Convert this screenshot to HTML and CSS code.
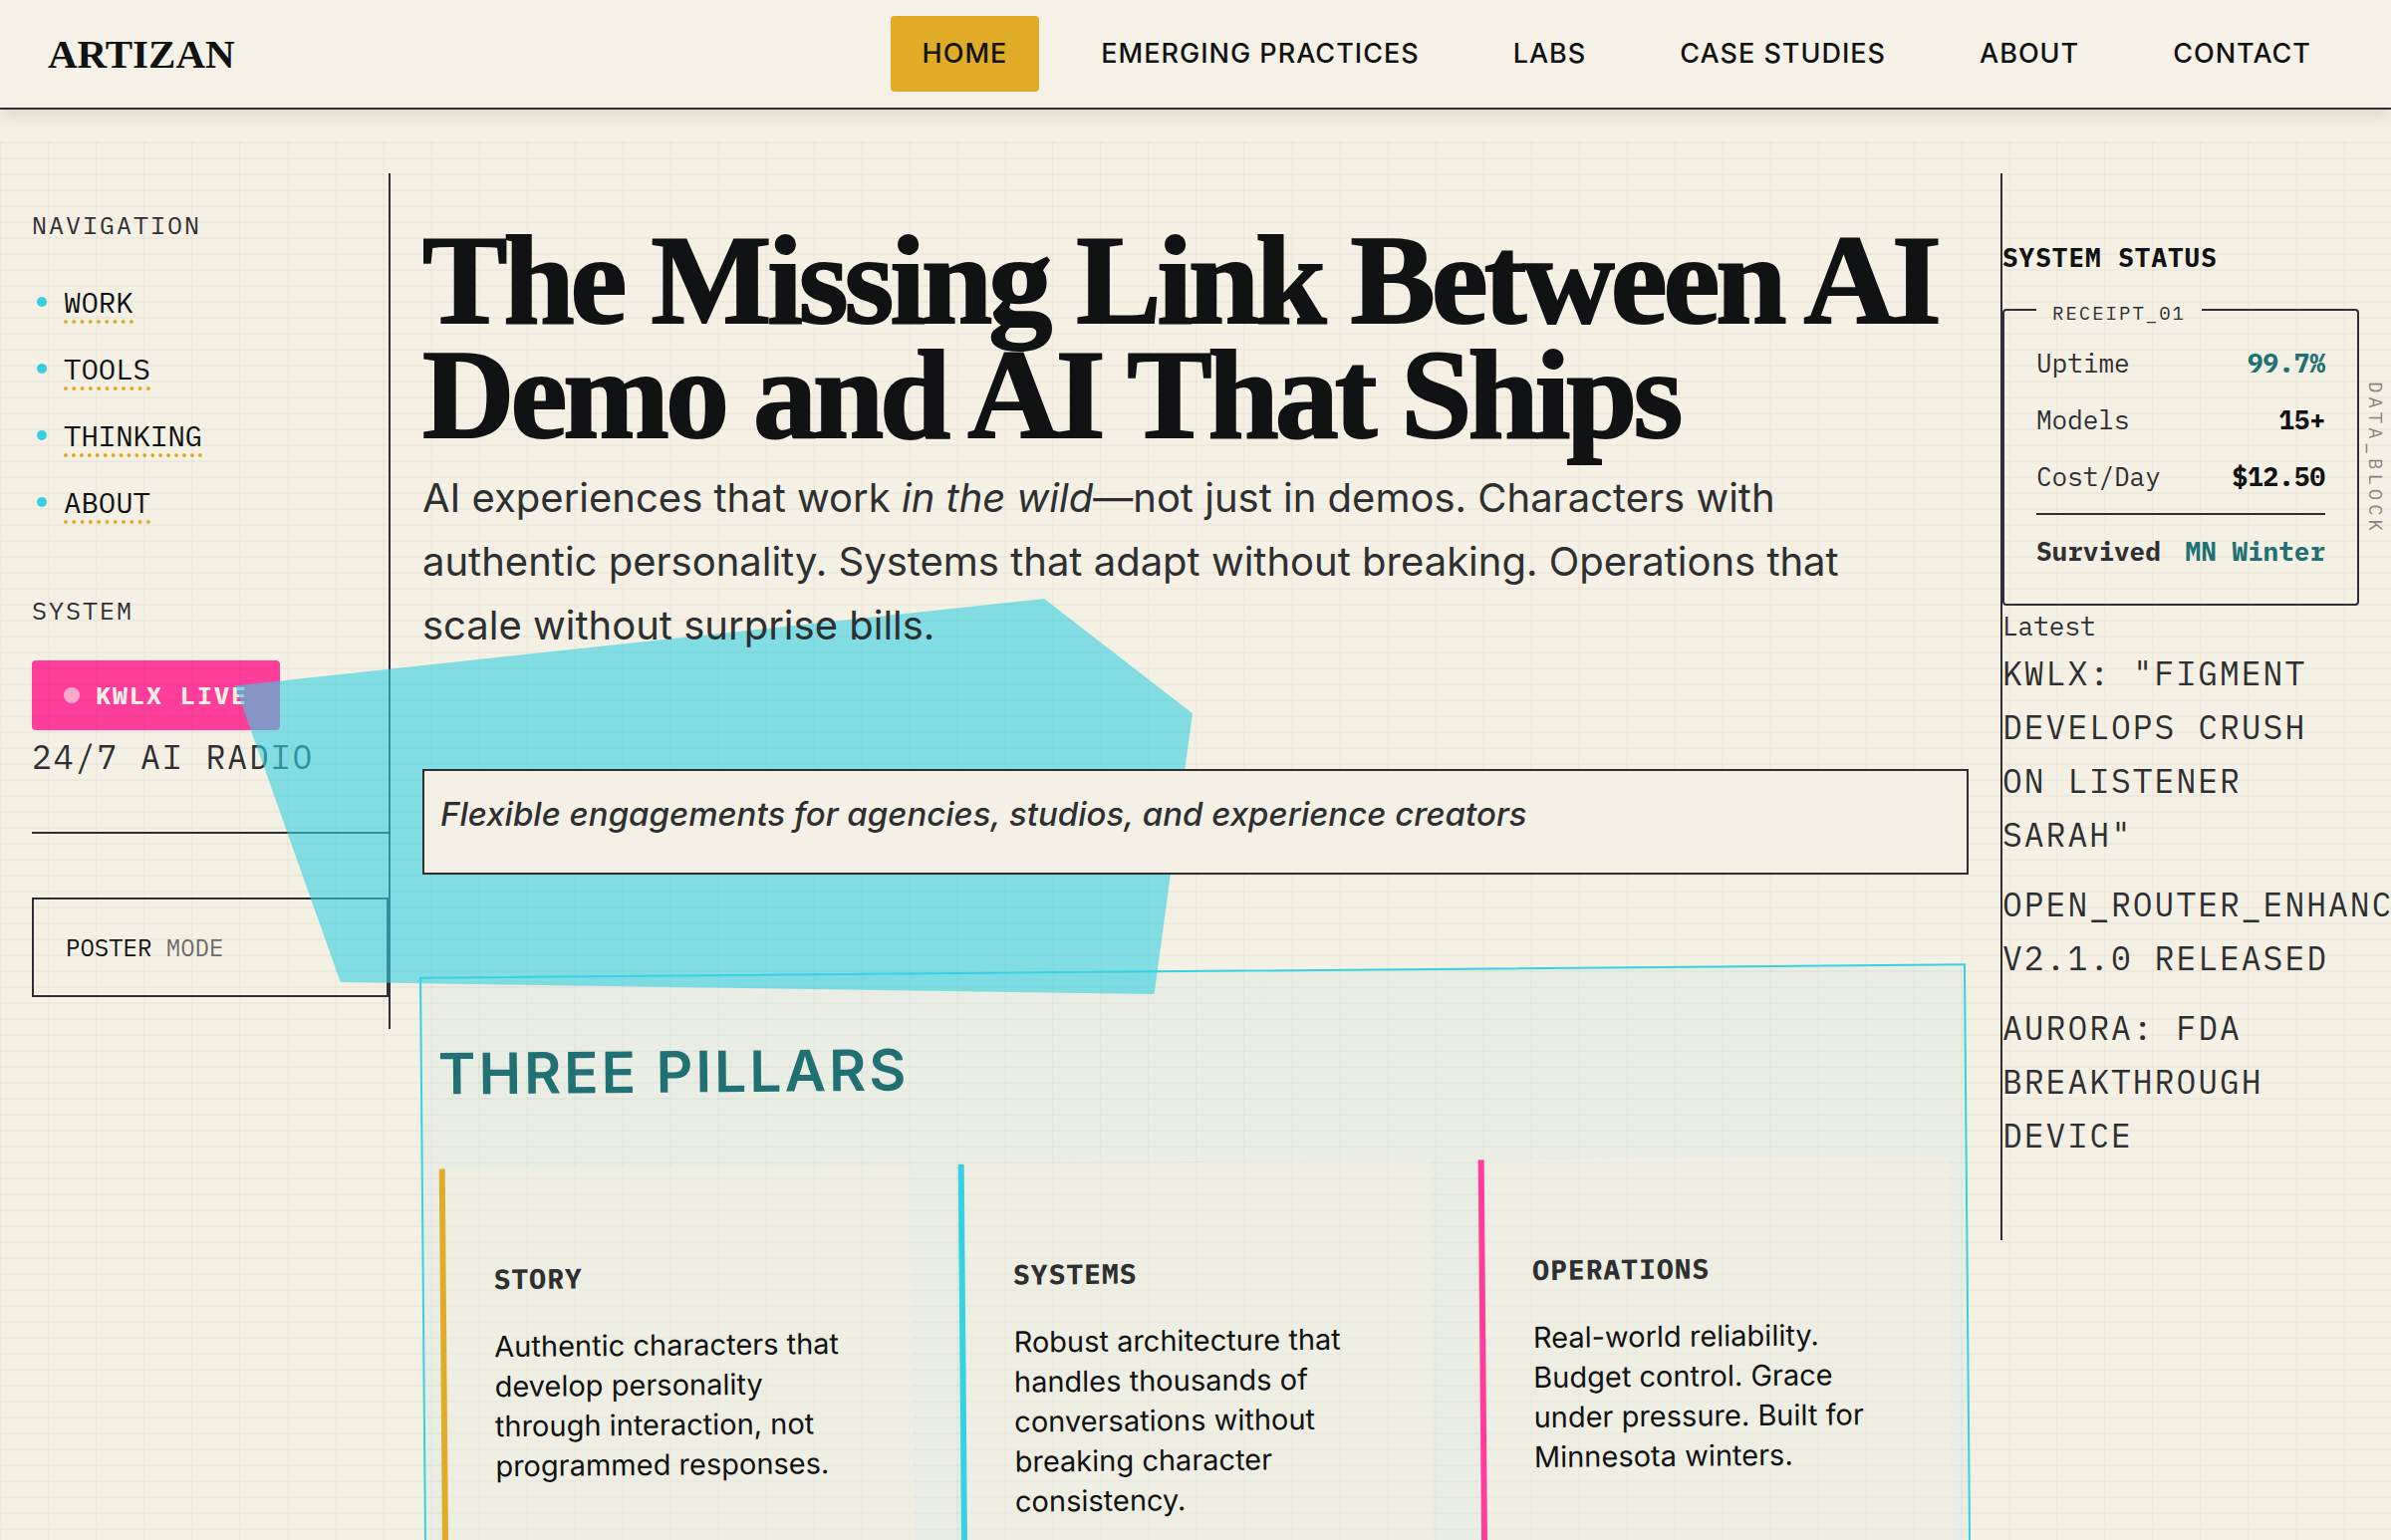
FILE: index.html
```html
<!DOCTYPE html>
<html lang="en">
<head>
<meta charset="utf-8">
<title>Artizan</title>
<meta name="viewport" content="width=device-width, initial-scale=1">
<link rel="stylesheet" href="styles.css">
</head>
<body>
<header class="site-header">
  <a class="logo" href="#">ARTIZAN</a>
  <nav class="site-nav" aria-label="Main">
    <a class="active" href="#">HOME</a>
    <a href="#">EMERGING PRACTICES</a>
    <a href="#">LABS</a>
    <a href="#">CASE STUDIES</a>
    <a href="#">ABOUT</a>
    <a href="#">CONTACT</a>
  </nav>
</header>
<div class="layout">
  <aside class="side side-left">
    <h2 class="side-title">NAVIGATION</h2>
    <ul class="side-links">
      <li><a href="#">WORK</a></li>
      <li><a href="#">TOOLS</a></li>
      <li><a href="#">THINKING</a></li>
      <li><a href="#">ABOUT</a></li>
    </ul>
    <h2 class="side-title">SYSTEM</h2>
    <button class="live" type="button"><span class="live-dot"></span>KWLX LIVE</button>
    <p class="mono-note">24/7 AI RADIO</p>
    <hr class="rule">
    <button class="poster" type="button">POSTER <span>MODE</span></button>
  </aside>
  <main class="content">
    <div class="blob" aria-hidden="true"></div>
    <h1>The Missing Link Between AI Demo and AI That Ships</h1>
    <p class="intro">AI experiences that work <em>in the wild</em>—not just in demos. Characters with authentic personality. Systems that adapt without breaking. Operations that scale without surprise bills.</p>
    <p class="tagline">Flexible engagements for agencies, studios, and experience creators</p>
    <section class="pillars">
      <h2>THREE PILLARS</h2>
      <div class="cards">
        <article class="card story">
          <h3>STORY</h3>
          <p>Authentic characters that develop personality through interaction, not programmed responses.</p>
        </article>
        <article class="card systems">
          <h3>SYSTEMS</h3>
          <p>Robust architecture that handles thousands of conversations without breaking character consistency.</p>
        </article>
        <article class="card operations">
          <h3>OPERATIONS</h3>
          <p>Real-world reliability. Budget control. Grace under pressure. Built for Minnesota winters.</p>
        </article>
      </div>
    </section>
  </main>
  <aside class="side side-right">
    <h2 class="status-title">SYSTEM STATUS</h2>
    <div class="receipt">
      <span class="receipt-label">RECEIPT_01</span>
      <dl>
        <div><dt>Uptime</dt><dd class="good">99.7%</dd></div>
        <div><dt>Models</dt><dd>15+</dd></div>
        <div><dt>Cost/Day</dt><dd>$12.50</dd></div>
        <div class="total"><dt>Survived</dt><dd class="good">MN Winter</dd></div>
      </dl>
      <span class="receipt-side">DATA_BLOCK</span>
    </div>
    <p class="latest">Latest</p>
    <ul class="news">
      <li class="mono-note">KWLX: "FIGMENT DEVELOPS CRUSH ON LISTENER SARAH"</li>
      <li class="mono-note">OPEN_ROUTER_ENHANCED V2.1.0 RELEASED</li>
      <li class="mono-note">AURORA: FDA BREAKTHROUGH DEVICE</li>
    </ul>
  </aside>
</div>
</body>
</html>
```

FILE: styles.css
```css
:root {
  --paper: #f5f0e4;
  --ink: #111213;
  --soft: #2d2f31;
  --cyan: #36d1e2;
  --gold: #e0ac28;
  --pink: #ff3d9a;
  --teal: #207074;
  --mono: "IBM Plex Mono", "Liberation Mono", monospace;
  --sans: Inter, "Liberation Sans", sans-serif;
  --serif: "Liberation Serif", serif;
}

* { box-sizing: border-box; }

html { overflow-x: hidden; }

body {
  margin: 0;
  background: var(--paper);
  color: var(--ink);
  font-family: var(--sans);
  overflow-x: hidden;
}

h1, h2, h3, p, ul, dl, dd { margin: 0; padding: 0; }
ul { list-style: none; }
a { color: inherit; text-decoration: none; }
button { font: inherit; color: inherit; text-align: left; cursor: pointer; }

.site-header {
  position: relative;
  z-index: 5;
  display: flex;
  align-items: center;
  justify-content: space-between;
  padding: 16px 48px;
  background: #f6f1e6;
  border-bottom: 2px solid var(--soft);
  box-shadow: 0 4px 16px rgba(45, 60, 49, 0.16);
}

.logo {
  font-family: var(--serif);
  font-weight: 700;
  font-size: 41px;
  line-height: 44px;
}

.site-nav { display: flex; gap: 30px; }

.site-nav a {
  padding: 16px 32px;
  border-radius: 4px;
  font-size: 27px;
  font-weight: 500;
  line-height: 44px;
  letter-spacing: 1px;
}

.site-nav .active { background: var(--gold); }

.layout {
  position: relative;
  display: grid;
  grid-template-columns: 360px minmax(0, 1fr) 360px;
  gap: 32px;
  align-items: start;
  margin-top: 32px;
  padding: 32px;
}

/* Ledger paper lines, drawn over the side columns and under the main text */
.layout::before {
  content: "";
  position: absolute;
  inset: 0;
  z-index: 1;
  pointer-events: none;
  background:
    repeating-linear-gradient(to right, rgba(45, 60, 49, 0.03) 0 2px, transparent 2px 48px),
    repeating-linear-gradient(to bottom, rgba(45, 60, 49, 0.04) 0 2px, transparent 2px 16px);
}

.side { font-family: var(--mono); }

.side-left {
  padding: 32px 0;
  border-right: 2px solid var(--soft);
}

.side-title {
  margin-bottom: 30px;
  color: var(--soft);
  font-size: 25px;
  font-weight: 400;
  line-height: 40px;
  letter-spacing: 2px;
}

.side-links {
  display: grid;
  gap: 16px;
  margin-bottom: 62px;
  padding-top: 3px;
}

.side-links li {
  display: flex;
  align-items: center;
  min-height: 51px;
  padding-left: 5px;
  font-size: 29px;
}

.side-links li::before {
  content: "";
  width: 10px;
  height: 10px;
  margin: 0 17px 4px 0;
  border-radius: 50%;
  background: var(--cyan);
}

.side-links a {
  line-height: 36px;
  border-bottom: 4px dotted var(--gold);
}

.live {
  display: flex;
  align-items: center;
  gap: 16px;
  padding: 16px 32px;
  border: 0;
  border-radius: 4px;
  background: var(--pink);
  color: var(--paper);
  font-size: 25px;
  font-weight: 700;
  line-height: 38px;
  letter-spacing: 2px;
}

.live-dot {
  width: 16px;
  height: 16px;
  border-radius: 50%;
  background: #f9acce;
}

.mono-note {
  color: var(--soft);
  font-size: 33px;
  line-height: 54px;
  letter-spacing: 2px;
}

.rule {
  margin: 48px 0 64px;
  border: 0;
  border-top: 2px solid var(--soft);
}

.poster {
  display: block;
  width: 100%;
  padding: 28px 32px;
  border: 2px solid var(--soft);
  background: none;
  font-size: 24px;
  line-height: 40px;
}

.poster span { opacity: 0.6; }

.content {
  position: relative;
  z-index: 2;
  padding-top: 50px;
}

.blob {
  position: absolute;
  z-index: -1;
  left: -188px;
  top: 427px;
  width: 961px;
  height: 397px;
  background: var(--cyan);
  opacity: 0.6;
  clip-path: polygon(0 22%, 84.5% 0, 100% 29%, 96% 100%, 11% 97%);
}

h1 {
  margin-bottom: 14px;
  font-family: var(--serif);
  font-size: 128px;
  font-weight: 700;
  line-height: 115px;
  letter-spacing: -4px;
  -webkit-text-stroke: 2px var(--ink);
}

.intro {
  max-width: 1480px;
  margin-bottom: 112px;
  color: var(--soft);
  font-size: 40px;
  line-height: 64px;
}

.tagline {
  margin-bottom: 96px;
  padding: 16px 16px 32px;
  border: 2px solid var(--soft);
  background: #f5f0e6;
  color: var(--soft);
  font-size: 33px;
  font-style: italic;
  font-weight: 500;
  line-height: 54px;
}

.pillars {
  padding: 16px;
  border: 2px solid var(--cyan);
  background: rgba(54, 209, 226, 0.06);
  transform: rotate(-0.5deg);
}

.pillars h2 {
  margin: 32px 0 48px;
  color: var(--teal);
  font-size: 57px;
  font-weight: 600;
  line-height: 95px;
  letter-spacing: 3px;
}

.cards {
  display: grid;
  grid-template-columns: repeat(3, minmax(0, 1fr));
  gap: 48px;
}

.card {
  padding: 88px 48px 120px;
  border-left: 6px solid var(--cyan);
  background: rgba(245, 240, 228, 0.5);
}

.card.story { border-color: var(--gold); }
.card.operations { border-color: var(--pink); }

.card h3 {
  margin-bottom: 26px;
  color: var(--soft);
  font-family: var(--mono);
  font-size: 28px;
  font-weight: 700;
  line-height: 45px;
  letter-spacing: 1px;
}

.card p { font-size: 29px; line-height: 40px; }

.side-right {
  padding: 64px 0 78px;
  border-left: 2px solid var(--soft);
}

.status-title {
  margin-bottom: 32px;
  font-size: 26px;
  font-weight: 700;
  line-height: 40px;
  letter-spacing: 1px;
}

.receipt {
  position: relative;
  padding: 32px;
  border: 2px solid var(--soft);
  border-radius: 4px;
  font-size: 26px;
  line-height: 41px;
}

.receipt-label {
  position: absolute;
  top: -13px;
  left: 32px;
  padding: 0 16px;
  background: var(--paper);
  color: var(--soft);
  font-size: 19px;
  line-height: 30px;
  letter-spacing: 2px;
}

.receipt-side {
  position: absolute;
  top: 71px;
  right: -34px;
  color: #86857f;
  font-size: 19px;
  line-height: 30px;
  letter-spacing: 4px;
  writing-mode: vertical-rl;
}

.receipt dl { display: grid; gap: 16px; }

.receipt dl div {
  display: flex;
  justify-content: space-between;
}

.receipt dt { color: var(--soft); }
.receipt dd { font-weight: 700; }
.receipt .good { color: var(--teal); }

.receipt .total {
  padding-top: 16px;
  border-top: 2px solid var(--soft);
}

.receipt .total dt { font-weight: 700; }

.latest {
  color: var(--soft);
  font-size: 26px;
  line-height: 41px;
}

.news {
  display: grid;
  grid-template-columns: minmax(0, 1fr);
  gap: 16px;
}
```
